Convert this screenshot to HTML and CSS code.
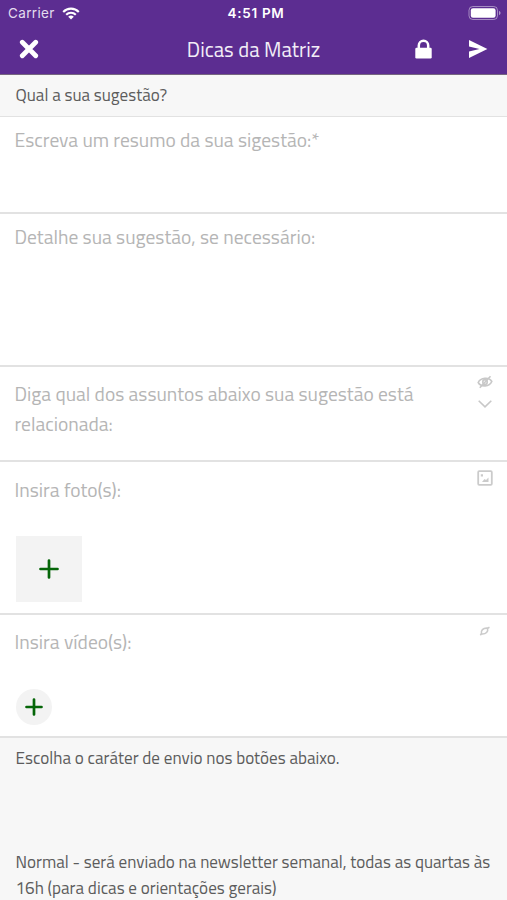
FILE: index.html
```html
<!doctype html>
<html lang="pt-BR">
  <head>
    <meta charset="UTF-8" />
    <meta name="viewport" content="width=device-width, initial-scale=1.0" />
    <title>Dicas da Matriz</title>
    <link rel="stylesheet" href="styles.css">
  </head>
  <body>
    <header class="header">
      <div class="status-bar">
        <div class="carrier">
          <span>Carrier</span>
          <svg width="18" height="13" viewBox="0 0 18 13" fill="none" stroke="#fff" stroke-width="2.1">
            <path d="M1.2 4.9a11 11 0 0 1 15.6 0" />
            <path d="M4.2 7.8a6.8 6.8 0 0 1 9.6 0" />
            <path d="M9 12.6 6.2 9.8a4 4 0 0 1 5.6 0z" fill="#fff" stroke="none" />
          </svg>
        </div>
        <span class="time">4:51 PM</span>
        <svg class="battery" width="33" height="14" viewBox="0 0 33 14">
          <rect x="1" y="0.5" width="28.5" height="13" rx="3.8" fill="none" stroke="#fff" stroke-opacity="0.45" />
          <rect x="2.8" y="2.3" width="24.8" height="9.4" rx="2.2" fill="#fff" />
          <path d="M31 5v4c1-.4 1.5-1 1.5-2S32 5.4 31 5z" fill="#fff" fill-opacity="0.5" />
        </svg>
      </div>
      <div class="nav-bar">
        <button class="icon-btn" aria-label="Fechar">
          <svg width="20" height="20" viewBox="0 0 20 20" stroke="#fff" stroke-width="4.8" stroke-linecap="round">
            <path d="M3.3 3.3l13.4 13.4M16.7 3.3 3.3 16.7" />
          </svg>
        </button>
        <h1>Dicas da Matriz</h1>
        <div class="nav-actions">
          <button class="icon-btn" aria-label="Privado">
            <svg width="17" height="20" viewBox="0 0 17 20">
              <path d="M3.8 10V6.4a4.7 4.7 0 0 1 9.4 0V10" fill="none" stroke="#fff" stroke-width="2.5" />
              <rect x="0.3" y="8.7" width="16.4" height="10.8" rx="1.2" fill="#fff" />
            </svg>
          </button>
          <button class="icon-btn" aria-label="Enviar">
            <svg width="20" height="20" viewBox="0 0 20 20">
              <path d="M1 1 19.4 10 1 19V12.4L11.5 10 1 7.6z" fill="#fff" />
            </svg>
          </button>
        </div>
      </div>
    </header>

    <main class="form">
      <section class="note note-question">
        <p>Qual a sua sugestão?</p>
      </section>

      <section class="field field-summary">
        <label>Escreva um resumo da sua sigestão:*</label>
      </section>

      <section class="field field-detail">
        <label>Detalhe sua sugestão, se necessário:</label>
      </section>

      <section class="field field-subject">
        <label>Diga qual dos assuntos abaixo sua sugestão está<br>relacionada:</label>
        <div class="field-icons">
          <svg width="16" height="14" viewBox="0 0 16 14" fill="none" stroke="#c8c8c8" stroke-width="1.6">
            <path d="M1.2 7.5C3.5 2.5 12 1.5 14.8 6.5 12.5 11.8 4 12.5 1.2 7.5z" />
            <ellipse cx="8" cy="7" rx="2.2" ry="2.4" />
            <path d="M2.8 12.8 13.5 1.2" />
          </svg>
          <svg width="14" height="8" viewBox="0 0 14 8" fill="none" stroke="#c8c8c8" stroke-width="1.6">
            <path d="M0.7 0.7 7 6.8l6.3-6.1" />
          </svg>
        </div>
      </section>

      <section class="field field-photo">
        <label>Insira foto(s):</label>
        <button class="add add-photo" aria-label="Adicionar foto">
          <svg width="20" height="20" viewBox="0 0 20 20" stroke="#056608" stroke-width="2.7" stroke-linecap="round">
            <path d="M10 1.5v17M1.5 10h17" />
          </svg>
        </button>
        <div class="field-icons">
          <svg width="16" height="16" viewBox="0 0 16 16" fill="none" stroke="#cbcbcb" stroke-width="1.8">
            <rect x="1.2" y="1.2" width="13.6" height="13.6" rx="1" />
            <path d="M3.8 4.3H6v2.2H3.8zM5 12h6.500V7.500L9 10 7.500 9z" fill="#cbcbcb" stroke="none" />
          </svg>
        </div>
      </section>

      <section class="field field-video">
        <label>Insira vídeo(s):</label>
        <button class="add add-video" aria-label="Adicionar vídeo">
          <svg width="18" height="18" viewBox="0 0 18 18" stroke="#056608" stroke-width="2.7" stroke-linecap="round">
            <path d="M9 1.5v15M1.5 9h15" />
          </svg>
        </button>
        <div class="field-icons link-icon">
          <svg width="12" height="10" viewBox="0 0 12 10" fill="none" stroke="#cbcbcb" stroke-width="1.6">
            <path d="M2.5 8C1.5 4.500 4 1.800 8.500 2.200 9.500 5.500 7 8.500 2.500 8z" />
            <path d="M8.5 2.2 10.5 1.2M2.5 8 1.2 9" />
          </svg>
        </div>
      </section>

      <section class="note note-delivery">
        <p>Escolha o caráter de envio nos botões abaixo.</p>
        <p>Normal - será enviado na newsletter semanal, todas as quartas às<br>16h (para dicas e orientações gerais)</p>
      </section>
    </main>
  </body>
</html>
```
FILE: styles.css
```css
* {
  box-sizing: border-box;
  margin: 0;
  padding: 0;
}

body {
  height: 900px;
  overflow: hidden;
  font-family: "Titillium Web", "Noto Sans", sans-serif;
  font-size: 17.1px;
  background: #fff;
  color: #5c5c5c;
}

button {
  display: flex;
  align-items: center;
  justify-content: center;
  border: none;
  background: none;
}

svg {
  display: block;
}

/* Header */
.header {
  height: 75px;
  background: #5c2d91;
  border-bottom: 1px solid #76667f;
  color: #fff;
}

.status-bar {
  display: grid;
  grid-template-columns: 1fr auto 1fr;
  align-items: center;
  height: 26px;
  padding: 0 6px 0 8px;
  font-family: Inter, sans-serif;
  font-size: 13.5px;
}

.carrier {
  display: flex;
  align-items: center;
  gap: 7px;
  letter-spacing: 0.35px;
  color: #e4dcee;
}

.time {
  padding-left: 3px;
  font-weight: 600;
  letter-spacing: 0.7px;
}

.battery {
  justify-self: end;
}

.nav-bar {
  display: grid;
  grid-template-columns: 1fr auto 1fr;
  align-items: center;
  height: 45px;
  padding: 0 19px;
}

.nav-bar h1 {
  padding-top: 3px;
  font-size: 20.7px;
  font-weight: 400;
  line-height: 30px;
  color: #f2edf7;
}

.icon-btn {
  justify-self: start;
}

.nav-actions {
  display: flex;
  justify-self: end;
  gap: 36px;
}

/* Form */
.note {
  padding: 7px 15.5px;
  background: #f7f7f7;
  line-height: 26px;
}

.note-question {
  height: 41px;
}

.field {
  display: flex;
  flex-wrap: wrap;
  align-content: flex-start;
  position: relative;
  padding: 8px 14.5px;
  border-top: 2px solid #e2e2e2;
  font-size: 19.5px;
  line-height: 30px;
  color: #b5b5b5;
}

.field label {
  width: 100%;
  white-space: nowrap;
}

.field-summary {
  height: 96px;
  border-top-width: 1px;
}

.field-detail {
  height: 153px;
}

.field-subject {
  height: 95px;
  padding-top: 12px;
}

.field-photo {
  height: 153px;
  padding-top: 13px;
}

.field-video {
  height: 123px;
  padding-top: 12px;
}

.field-icons {
  display: flex;
  flex-direction: column;
  align-items: center;
  gap: 11px;
  position: absolute;
  top: 8px;
  right: 14px;
  width: 16px;
}

.link-icon {
  top: 11px;
}

.add {
  margin-left: 1.5px;
  background: #f3f3f3;
}

.add-photo {
  width: 66px;
  height: 66px;
  margin-top: 31px;
}

.add-video {
  width: 36px;
  height: 36px;
  margin-top: 32px;
  border-radius: 50%;
}

.note-delivery {
  height: 164px;
  border-top: 2px solid #e2e2e2;
  white-space: nowrap;
}

.note-delivery p + p {
  margin-top: 78px;
}
```
